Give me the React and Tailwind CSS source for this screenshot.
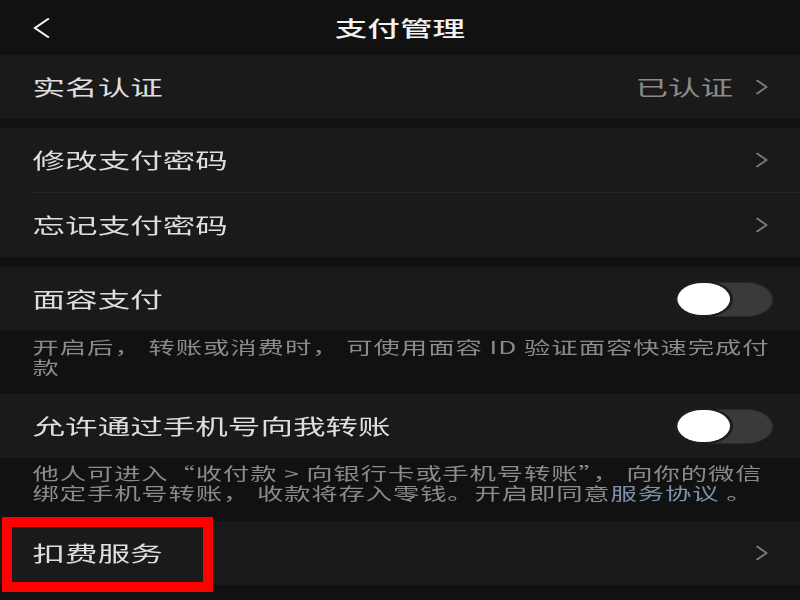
import React, { useState } from "react";

// 参考图是横向拉伸过的手机截图，内容按 516px 宽排版后整体横向放大
const Chevron = () => (
  <svg width="9" height="16" viewBox="0 0 9 16" fill="none">
    <polyline points="1.5,1.5 7.5,8 1.5,14.5" stroke="#7a7a7a" strokeWidth="1.6" strokeLinecap="round" strokeLinejoin="round" />
  </svg>
);

const Toggle = ({ on, onClick }) => (
  <button
    onClick={onClick}
    className={`flex h-[35px] w-[64px] items-center rounded-full border border-[#2a2a2a] ${on ? "bg-[#07c160] justify-end" : "bg-[#3a3a3a] justify-start"}`}
  >
    <span className="mx-[1px] h-[32px] w-[34px] rounded-full bg-white shadow-[0_0_0_2px_#1e1e1e]" />
  </button>
);

const Row = ({ label, children, toggle }) => (
  <div className={`flex h-[64px] items-center bg-[#1a1a1a] pl-[21px] ${toggle ? "pr-[17px]" : "pr-[20px]"}`}>
    <div className="flex-1 text-[21px] text-[#dedede]">{label}</div>
    {children}
  </div>
);

export default function App() {
  const [face, setFace] = useState(false);
  const [phone, setPhone] = useState(false);

  return (
    <div className="relative h-[600px] w-[800px] overflow-hidden bg-[#111111] font-['Noto_Sans_CJK_SC','Noto_Sans',sans-serif]">
      <div className="w-[516px] origin-top-left scale-x-[1.55]">
        {/* 顶部导航 */}
        <div className="grid h-[55px] grid-cols-[1fr_auto_1fr] items-center bg-[#111111]">
          <div className="pl-[21px] pt-[1px]">
            <svg width="11" height="20" viewBox="0 0 11 20" fill="none">
              <polyline points="10,1 1.5,10 10,19" stroke="#f2f2f2" strokeWidth="1.8" strokeLinecap="round" strokeLinejoin="round" />
            </svg>
          </div>
          <div className="text-[21px] font-medium text-[#f2f2f2]">支付管理</div>
          <div />
        </div>

        <Row label="实名认证">
          <span className="mr-[14px] text-[21px] text-[#8a8a8a]">已认证</span>
          <Chevron />
        </Row>

        <div className="h-[9px]" />

        <Row label="修改支付密码">
          <Chevron />
        </Row>
        <div className="bg-[#1a1a1a] pl-[20px]">
          <div className="h-[1px] bg-[#262626]" />
        </div>
        <Row label="忘记支付密码">
          <Chevron />
        </Row>

        <div className="h-[10px]" />

        <Row label="面容支付" toggle>
          <Toggle on={face} onClick={() => setFace(!face)} />
        </Row>
        <div className="h-[63px] whitespace-nowrap px-[21px] pt-[6px] text-[17px] leading-[20px] tracking-[0.6px] text-[#8b8b8b]">
          开启后， 转账或消费时， 可使用面容 ID 验证面容快速完成付
          <br />
          款
        </div>

        <Row label="允许通过手机号向我转账" toggle>
          <Toggle on={phone} onClick={() => setPhone(!phone)} />
        </Row>
        <div className="h-[63px] whitespace-nowrap px-[21px] pt-[5px] text-[17px] leading-[20px] tracking-[0.55px] text-[#8b8b8b]">
          他人可进入“收付款 &gt; 向银行卡或手机号转账”， 向你的微信
          <br />
          绑定手机号转账， 收款将存入零钱。开启即同意<span className="text-[#7f90aa]">服务协议</span> 。
        </div>

        <Row label="扣费服务">
          <Chevron />
        </Row>
      </div>

      {/* 红色标注框 */}
      <div className="absolute left-[2px] top-[517px] h-[75px] w-[211px] border-[10px] border-[#ff0000]" />
    </div>
  );
}
